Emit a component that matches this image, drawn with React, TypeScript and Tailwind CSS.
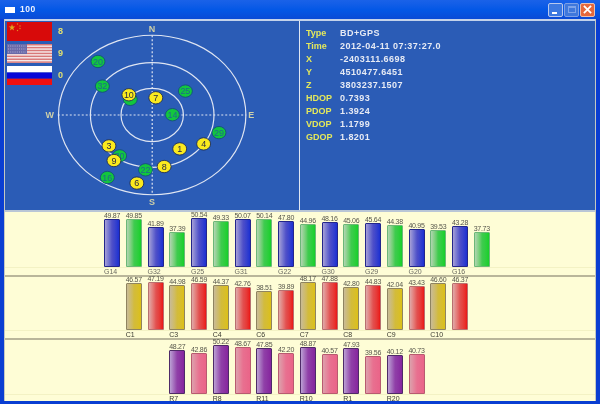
import React from "react";

type Tone = "blue" | "green" | "gold" | "red" | "purple" | "pink";

const toneClass: Record<Tone, string> = {
  blue: "from-[#a79fd6] via-[#4f4fc8] to-[#1c2fd2] border-[#23268c]",
  green: "from-[#b0d4b0] via-[#3fcb4f] to-[#14d028] border-[#6cb878]",
  gold: "from-[#c9bb95] via-[#d2bb3c] to-[#dcc014] border-[#8f8460]",
  red: "from-[#dfa8a8] via-[#e25050] to-[#ea1414] border-[#b87070]",
  purple: "from-[#bba0d4] via-[#9040a8] to-[#86249e] border-[#4e2a68]",
  pink: "from-[#dca0ac] via-[#e87090] to-[#ea6488] border-[#b85a70]",
};

type Bar = { v: string; h: number; label?: string };

const row1: Bar[] = [
  { v: "49.87", h: 48, label: "G14" }, { v: "49.85", h: 48 },
  { v: "41.89", h: 40, label: "G32" }, { v: "37.39", h: 35 },
  { v: "50.54", h: 49, label: "G25" }, { v: "49.33", h: 46 },
  { v: "50.07", h: 48, label: "G31" }, { v: "50.14", h: 48 },
  { v: "47.80", h: 46, label: "G22" }, { v: "44.96", h: 43 },
  { v: "48.16", h: 45, label: "G30" }, { v: "45.06", h: 43 },
  { v: "45.64", h: 44, label: "G29" }, { v: "44.38", h: 42 },
  { v: "40.95", h: 38, label: "G20" }, { v: "39.53", h: 37 },
  { v: "43.28", h: 41, label: "G16" }, { v: "37.73", h: 35 },
];
const row2: Bar[] = [
  { v: "46.57", h: 47, label: "C1" }, { v: "47.19", h: 48 },
  { v: "44.98", h: 45, label: "C3" }, { v: "46.59", h: 47 },
  { v: "44.37", h: 45, label: "C4" }, { v: "42.76", h: 43 },
  { v: "38.51", h: 39, label: "C6" }, { v: "39.89", h: 40 },
  { v: "48.17", h: 48, label: "C7" }, { v: "47.88", h: 48 },
  { v: "42.80", h: 43, label: "C8" }, { v: "44.83", h: 45 },
  { v: "42.04", h: 42, label: "C9" }, { v: "43.43", h: 44 },
  { v: "46.60", h: 47, label: "C10" }, { v: "46.37", h: 47 },
];
const row3: Bar[] = [
  { v: "48.27", h: 44, label: "R7" }, { v: "42.86", h: 41 },
  { v: "50.22", h: 49, label: "R8" }, { v: "48.67", h: 47 },
  { v: "47.85", h: 46, label: "R11" }, { v: "42.20", h: 41 },
  { v: "48.87", h: 47, label: "R10" }, { v: "40.57", h: 40 },
  { v: "47.93", h: 46, label: "R1" }, { v: "39.56", h: 38 },
  { v: "40.12", h: 39, label: "R20" }, { v: "40.73", h: 40 },
];

function ChartRow({
  bars, a, b, pad, height, strip, labelColor,
}: { bars: Bar[]; a: Tone; b: Tone; pad: string; height: string; strip: string; labelColor: string }) {
  return (
    <div className={`flex flex-col bg-[#fefdd6] ${height}`}>
      <div className={`flex min-h-0 flex-1 items-end ${pad}`}>
        {bars.map((bar, i) => (
          <div key={i} className="flex w-[21.75px] shrink-0 flex-col items-start">
            <span className="w-[16px] whitespace-nowrap text-center text-[7px] leading-[7px] tracking-[-0.3px] text-[#55554a]">{bar.v}</span>
            <div
              className={`w-[16px] rounded-t-[1px] border bg-linear-to-r ${toneClass[i % 2 === 0 ? a : b]}`}
              style={{ height: bar.h }}
            />
          </div>
        ))}
      </div>
      <div className={`flex shrink-0 border-t border-[#f3f2c4] ${strip} ${pad}`}>
        {bars.map((bar, i) => (
          <span key={i} className={`w-[21.75px] shrink-0 text-[7px] leading-[7px] ${labelColor}`}>{bar.label ?? ""}</span>
        ))}
      </div>
    </div>
  );
}

const greens: [string, number, number][] = [
  ["20", 98.3, 61.3], ["32", 102.7, 86], ["25", 186, 91], ["", 130.7, 99.3], ["14", 173, 114.7],
  ["29", 219.7, 132.7], ["30", 120, 156], ["22", 146, 170], ["16", 107.7, 177.7],
];
const yellows: [string, number, number][] = [
  ["10", 129.3, 94.7], ["7", 156.3, 97.7], ["3", 109.3, 146], ["1", 180.3, 149], ["4", 204.3, 144],
  ["9", 114.3, 160.7], ["8", 164.7, 166.7], ["6", 137.3, 183.3],
];

function Radar() {
  return (
    <svg className="absolute inset-0 h-full w-full" viewBox="5 21 295 189" style={{ fontFamily: "'Liberation Sans', sans-serif" }}>
      <g fill="none" stroke="#dfe5f2" strokeWidth="1.2">
        <ellipse cx="152.7" cy="115" rx="94" ry="80" />
        <ellipse cx="152.7" cy="115" rx="62" ry="52.5" />
        <ellipse cx="152.7" cy="115" rx="31.3" ry="26.7" />
        <path d="M58 115H247M152.7 35V195" strokeDasharray="2 2" />
      </g>
      <g fill="#cfd0a8" fontSize="9" fontWeight="700" textAnchor="middle">
        <text x="152.5" y="31.5">N</text>
        <text x="152.5" y="205">S</text>
        <text x="50" y="118.5">W</text>
        <text x="252" y="118.5">E</text>
      </g>
      {greens.map(([t, x, y], i) => (
        <g key={i}>
          <ellipse cx={x} cy={y} rx="7" ry="6.2" fill="#12c63e" stroke="#14507a" strokeWidth="0.9" />
          <text x={x} y={y + 3.2} fontSize="9" textAnchor="middle" fill="#1d6a8c">{t}</text>
        </g>
      ))}
      {yellows.map(([t, x, y], i) => (
        <g key={i}>
          <ellipse cx={x} cy={y} rx="7" ry="6.2" fill="#fbea1e" stroke="#1f2d55" strokeWidth="0.9" />
          <text x={x} y={y + 3.2} fontSize="9" textAnchor="middle" fill="#2a2a40">{t}</text>
        </g>
      ))}
    </svg>
  );
}

function FlagCN() {
  return (
    <svg viewBox="0 0 45 19" className="h-[19px] w-[45px]">
      <rect width="45" height="19" fill="#d80a0a" />
      <polygon points="5,2 5.8,4.4 8.3,4.4 6.3,6 7,8.4 5,6.9 3,8.4 3.7,6 1.7,4.4 4.2,4.4" fill="#e0a820" />
      <circle cx="10.5" cy="2" r="0.7" fill="#e08a20" />
      <circle cx="13" cy="4" r="0.7" fill="#e08a20" />
      <circle cx="13" cy="6.5" r="0.7" fill="#e08a20" />
      <circle cx="10.5" cy="8.5" r="0.7" fill="#e08a20" />
    </svg>
  );
}
function FlagUS() {
  const stripes = [0, 1, 2, 3, 4, 5, 6];
  return (
    <svg viewBox="0 0 45 19" className="h-[19px] w-[45px]">
      <rect width="45" height="19" fill="#f6e8e8" />
      {stripes.map((s) => (
        <rect key={s} y={s * 2.9} width="45" height="1.45" fill="#d87878" />
      ))}
      <rect width="20" height="10" fill="#6a6aa8" />
      <path d="M1 2H19M1 5H19M1 8H19" stroke="#b0b0d8" strokeWidth="1" strokeDasharray="1 1.2" />
    </svg>
  );
}
function FlagRU() {
  return (
    <svg viewBox="0 0 45 19" className="h-[19px] w-[45px]">
      <rect width="45" height="6.5" fill="#ffffff" />
      <rect y="6.5" width="45" height="6.2" fill="#0808d8" />
      <rect y="12.7" width="45" height="6.3" fill="#f01010" />
    </svg>
  );
}

const info: [string, string][] = [
  ["Type", "BD+GPS"],
  ["Time", "2012-04-11 07:37:27.0"],
  ["X", "-2403111.6698"],
  ["Y", "4510477.6451"],
  ["Z", "3803237.1507"],
  ["HDOP", "0.7393"],
  ["PDOP", "1.3924"],
  ["VDOP", "1.1799"],
  ["GDOP", "1.8201"],
];

export default function App() {
  return (
    <div
      className="flex h-[404px] w-[600px] flex-col overflow-hidden bg-[#0a3ed2] blur-[0.4px]"
      style={{ fontFamily: "'Liberation Sans', Arial, sans-serif" }}
    >
      {/* Title bar */}
      <div className="flex h-[19px] shrink-0 items-center bg-linear-to-b from-[#1a62e8] via-[#0458e6] to-[#0a4ad6] pl-[5px] pr-[5px]">
        <div className="h-[6px] w-[10px] bg-white" />
        <span className="ml-[5px] text-[8.5px] font-bold tracking-[0.5px] text-[#eef2ff]">100</span>
        <div className="ml-auto flex items-center gap-[1px]">
          <div className="flex h-[14px] w-[15px] items-end justify-start rounded-[2px] border border-[#b8c8ee] bg-[#3c78e0] pb-[2px] pl-[3px]">
            <div className="h-[2px] w-[5px] bg-white" />
          </div>
          <div className="flex h-[14px] w-[15px] items-center justify-center rounded-[2px] border border-[#7ea0e6] bg-[#3f78dc]">
            <div className="h-[7px] w-[8px] border border-[#7ea4ea] border-t-2" />
          </div>
          <div className="flex h-[14px] w-[15px] items-center justify-center rounded-[2px] border border-[#e8c0b0] bg-[#e4683c]">
            <svg viewBox="0 0 10 10" className="h-[9px] w-[9px]">
              <path d="M1 1L9 9M9 1L1 9" stroke="#fff" strokeWidth="2" />
            </svg>
          </div>
        </div>
      </div>

      {/* Client area */}
      <div className="flex flex-1 flex-col pb-[3px] pl-[4px] pr-[4px]">
        <div className="flex flex-1 flex-col border-x border-[#c4c8c0]">
          {/* Upper panel */}
          <div className="flex h-[193px] shrink-0 border-y-2 border-t-[#c4d2ea] border-b-[#b9c6d6] bg-[#2b5cb6]">
            <div className="relative h-full w-[295px] shrink-0 border-r border-[#dfe6f2]">
              <Radar />
              <div className="absolute left-[2px] top-[1px] flex flex-col gap-[3px]">
                {[
                  { F: FlagCN, n: "8" },
                  { F: FlagUS, n: "9" },
                  { F: FlagRU, n: "0" },
                ].map(({ F, n }) => (
                  <div key={n} className="flex items-center gap-[6px]">
                    <F />
                    <span className="text-[9px] font-bold leading-none text-[#e0e070]">{n}</span>
                  </div>
                ))}
              </div>
            </div>
            <div className="flex flex-1 flex-col pl-[6px] pt-[6px]">
              {info.map(([k, v]) => (
                <div key={k} className="flex h-[13px] items-center">
                  <span className="w-[34px] shrink-0 text-[9px] font-bold leading-none text-[#e4e85c]">{k}</span>
                  <span className="text-[9px] font-bold leading-none tracking-[0.45px] text-[#e6eaf4]">{v}</span>
                </div>
              ))}
            </div>
          </div>

          {/* Charts */}
          <div className="flex flex-1 flex-col">
            <div className="border-b-2 border-[#b9b69a]">
              <ChartRow bars={row1} a="blue" b="green" pad="pl-[99px]" height="h-[63px]" strip="h-[8px]" labelColor="text-[#6a6a60]" />
            </div>
            <div className="border-b-2 border-[#b9b69a]">
              <ChartRow bars={row2} a="gold" b="red" pad="pl-[120.75px]" height="h-[61px]" strip="h-[8px]" labelColor="text-[#3a3a30]" />
            </div>
            <ChartRow bars={row3} a="purple" b="pink" pad="pl-[164.25px]" height="h-[61px]" strip="h-[7px]" labelColor="text-[#3a3a30]" />
          </div>
        </div>
      </div>
    </div>
  );
}
